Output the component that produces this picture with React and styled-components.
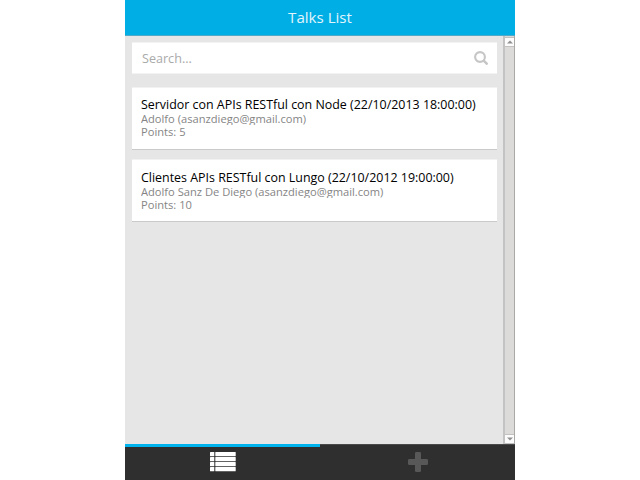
import React from 'react';
import styled, { createGlobalStyle } from 'styled-components';

const GlobalStyle = createGlobalStyle`
  * { box-sizing: border-box; }
  body { margin: 0; background: #fff; font-family: "Open Sans", "Noto Sans", sans-serif; }
`;

const Screen = styled.main`
  width: 390px;
  height: 480px;
  margin: 0 auto;
  display: flex;
  flex-direction: column;
  background: #e6e6e6;
`;

const Header = styled.header`
  flex: 0 0 36px;
  display: flex;
  justify-content: center;
  background: #00aee6;
  border-bottom: 1px solid #4fa9c8;
`;

const Title = styled.h1`
  margin: 0;
  font-size: 15.1px;
  font-weight: 400;
  line-height: 35px;
  color: #e2f5fc;
`;

const Body = styled.div`
  flex: 1;
  min-height: 0;
  display: flex;
`;

const Content = styled.section`
  flex: 1;
  min-width: 0;
  padding: 6px 6px 0 7px;
`;

const SearchBox = styled.label`
  display: flex;
  align-items: center;
  justify-content: space-between;
  height: 32px;
  padding: 0 9px 0 10px;
  margin-bottom: 13px;
  background: #fff;
  border: 1px solid #f3f3f3;
  border-width: 1px 0;
`;

const SearchInput = styled.input`
  width: 250px;
  padding: 1px 0 0;
  border: 0;
  outline: 0;
  background: none;
  font: 400 12.6px/19px "Open Sans", "Noto Sans", sans-serif;
  &::placeholder { color: #aaa; opacity: 1; }
`;

const List = styled.ul`
  display: flex;
  flex-direction: column;
  gap: 9px;
  margin: 0;
  padding: 0;
  list-style: none;
`;

const Card = styled.li`
  height: 63px;
  padding: ${(p) => (p.$first ? '9px' : '10px')} 9px 0;
  background: #fff;
  border-top: 1px solid #f2f2f2;
  border-bottom: 1px solid #cacaca;
  white-space: nowrap;
`;

const TalkName = styled.strong`
  display: block;
  font-size: 12.43px;
  font-weight: 400;
  line-height: 15px;
  color: #000;
`;

const Detail = styled.span`
  display: block;
  height: 13px;
  overflow: hidden;
  font-size: 11.15px;
  line-height: 14px;
  color: #858585;
`;

const Scrollbar = styled.div`
  flex: 0 0 12px;
  display: flex;
  flex-direction: column;
  justify-content: space-between;
  padding-top: 1px;
  background: #dcdbd9;
  border-left: 2px solid #c3c3c3;
  border-right: 1px solid #aaa9a6;
`;

const ScrollButton = styled.div`
  display: flex;
  align-items: center;
  justify-content: center;
  height: 10px;
  background: #fcfcfc;
  border: 1px solid #c2c1bf;
  border-width: 1px 0;
`;

const Footer = styled.nav`
  flex: 0 0 36px;
  display: flex;
  background: #2f2f2f;
`;

const Tab = styled.div`
  flex: 1;
  display: flex;
  align-items: flex-start;
  justify-content: center;
  padding-top: ${(p) => (p.$active ? '5px' : '7px')};
  border-top: ${(p) => (p.$active ? '3px solid #00b3ec' : '1px solid #4a4a4a')};
`;

const talks = [
  { name: 'Servidor con APIs RESTful con Node (22/10/2013 18:00:00)', author: 'Adolfo (asanzdiego@gmail.com)', points: 5 },
  { name: 'Clientes APIs RESTful con Lungo (22/10/2012 19:00:00)', author: 'Adolfo Sanz De Diego (asanzdiego@gmail.com)', points: 10 },
];

const Arrow = ({ d }) => (
  <svg width="6" height="4" viewBox="0 0 6 4"><path d={d} fill="#8f8f8f" /></svg>
);

export default function App() {
  return (
    <>
      <GlobalStyle />
      <Screen>
        <Header><Title>Talks List</Title></Header>
        <Body>
          <Content>
            <SearchBox>
              <SearchInput placeholder="Search..." />
              <svg width="14" height="14" viewBox="0 0 14 14" fill="none" stroke="#c6c6c6">
                <circle cx="6" cy="6" r="4.9" strokeWidth="2.1" />
                <path d="M9.7 9.7L12.7 12.7" strokeWidth="2.5" strokeLinecap="round" />
              </svg>
            </SearchBox>
            <List>
              {talks.map((t, i) => (
                <Card key={t.name} $first={i === 0}>
                  <TalkName>{t.name}</TalkName>
                  <Detail>{t.author}</Detail>
                  <Detail>Points: {t.points}</Detail>
                </Card>
              ))}
            </List>
          </Content>
          <Scrollbar>
            <ScrollButton><Arrow d="M0 3.5L3 .5L6 3.5Z" /></ScrollButton>
            <ScrollButton><Arrow d="M0 .5L3 3.5L6 .5Z" /></ScrollButton>
          </Scrollbar>
        </Body>
        <Footer>
          <Tab $active>
            <svg width="26" height="20" viewBox="0 0 26 20" fill="#fff">
              {[0, 5, 10, 15].map((y) => (
                <React.Fragment key={y}>
                  <rect x="0" y={y} width="4.3" height="4.3" rx=".5" />
                  <rect x="5.3" y={y} width="20.4" height="4.3" rx=".5" />
                </React.Fragment>
              ))}
            </svg>
          </Tab>
          <Tab>
            <svg width="20" height="20" viewBox="0 0 20 20" fill="#585858">
              <rect x="7" y="0" width="6" height="20" rx="1.3" />
              <rect x="0" y="7" width="20" height="6" rx="1.3" />
            </svg>
          </Tab>
        </Footer>
      </Screen>
    </>
  );
}
